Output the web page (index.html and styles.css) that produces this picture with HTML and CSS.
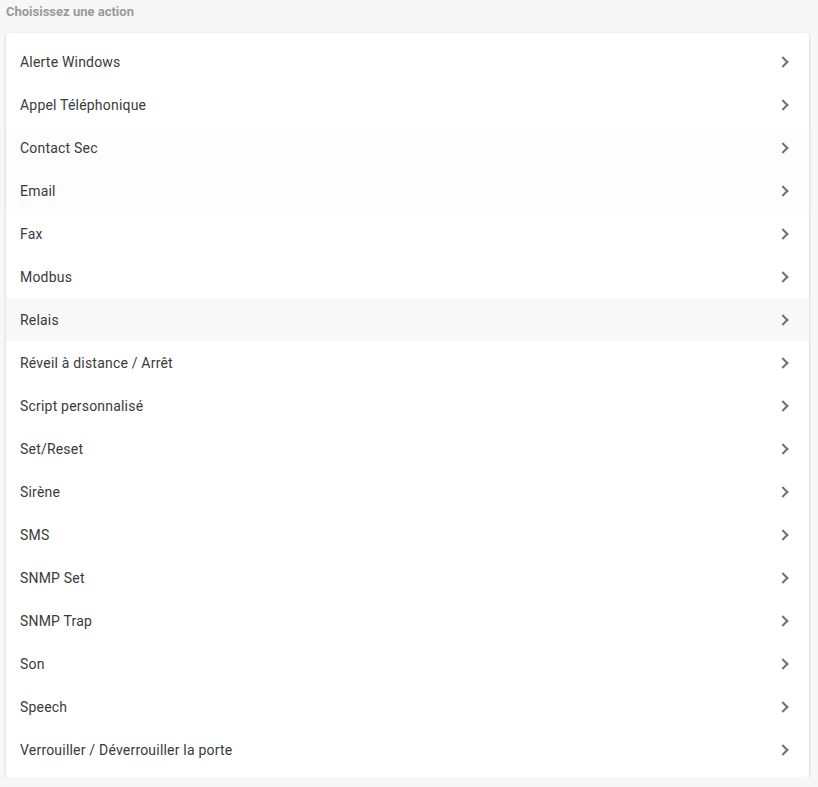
FILE: index.html
```html
<!DOCTYPE html>
<html lang="fr">
<head>
  <meta charset="UTF-8" />
  <meta name="viewport" content="width=device-width, initial-scale=1.0"/>
  <title>Choisissez une action</title>
  <link rel="stylesheet" href="styles.css">
</head>
<body>
  <h1 class="titre">Choisissez une action</h1>

  <ul class="actions">
    <li>Alerte Windows<span class="chevron"></span></li>
    <li>Appel Téléphonique<span class="chevron"></span></li>
    <li class="fade">Contact Sec<span class="chevron"></span></li>
    <li class="fade">Email<span class="chevron"></span></li>
    <li>Fax<span class="chevron"></span></li>
    <li>Modbus<span class="chevron"></span></li>
    <li class="hover">Relais<span class="chevron"></span></li>
    <li>Réveil à distance / Arrêt<span class="chevron"></span></li>
    <li>Script personnalisé<span class="chevron"></span></li>
    <li>Set/Reset<span class="chevron"></span></li>
    <li>Sirène<span class="chevron"></span></li>
    <li>SMS<span class="chevron"></span></li>
    <li>SNMP Set<span class="chevron"></span></li>
    <li>SNMP Trap<span class="chevron"></span></li>
    <li>Son<span class="chevron"></span></li>
    <li>Speech<span class="chevron"></span></li>
    <li>Verrouiller / Déverrouiller la porte<span class="chevron"></span></li>
  </ul>
</body>
</html>
```

FILE: styles.css
```css
body {
  font-family: Roboto, 'Liberation Sans', Arial, sans-serif;
  margin: 0;
  padding: 4px 9px 0 6px;
  background: #f7f7f7;
  color: #333;
}
.titre {
  font-size: 13px;
  font-weight: bold;
  color: #9a9a9a;
  margin: 0 0 13px 0;
  line-height: 16px;
}
.actions {
  list-style: none;
  margin: 0;
  padding: 7px 0 6px;
  background: #fff;
  border-radius: 3px;
  box-shadow: 0 1px 3px rgba(0,0,0,0.2);
}
.actions li {
  display: flex;
  justify-content: space-between;
  align-items: center;
  height: 43px;
  padding: 0 20px 0 14px;
  font-size: 14px;
  letter-spacing: 0.2px;
  color: #3a3a3a;
  cursor: pointer;
}
.actions li.fade {
  background: #fdfdfd;
}
.actions li.hover {
  background: #f8f8f8;
}
.chevron {
  width: 6px;
  height: 6px;
  border-top: 2px solid #727272;
  border-right: 2px solid #727272;
  transform: rotate(45deg);
  margin-right: 2px;
}
```
